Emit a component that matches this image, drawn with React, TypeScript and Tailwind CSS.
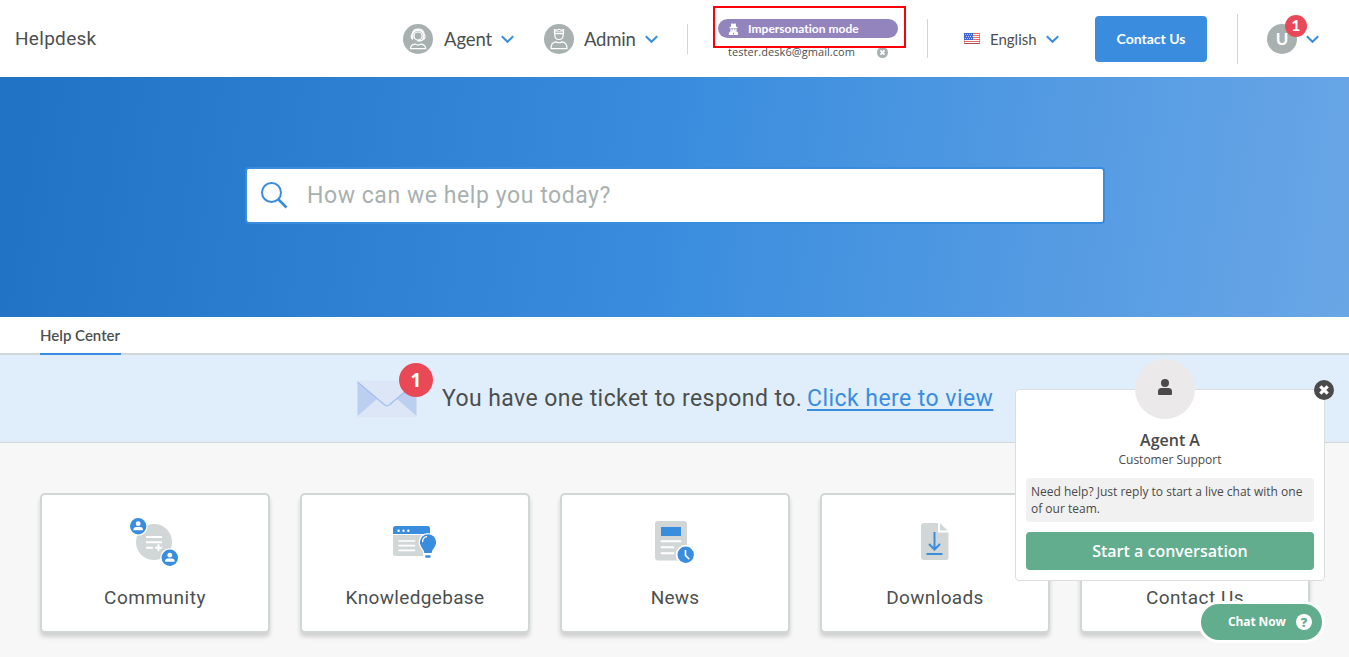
import React from "react";

const Chevron = () => (
  <svg className="relative top-px block h-[9px] w-[13px] shrink-0" viewBox="0 0 13 9" fill="none" stroke="#3a8dde" strokeWidth="2">
    <path d="M.8 1.300 6.500 6.800 12.200 1.300" />
  </svg>
);

const AgentAvatar = () => (
  <svg className="h-[30px] w-[30px] shrink-0" viewBox="0 0 30 30" fill="none">
    <circle cx="15" cy="15" r="15" fill="#a8b1b0" />
    <g stroke="#fff" strokeWidth="1.200">
      <path d="M9.800 15.500c-2-1.200-1.900-4-.7-5.200C10 3.500 20.500 3.500 21.200 10.300c1.200 1.200 1.300 4-.7 5.200" />
      <path d="M9.800 15V10.500c1-5.500 9.500-5.500 10.500 0V15" />
      <circle cx="15" cy="12" r="4" />
      <path d="M20.500 14.500c-.5 1.800-2 2.300-4 2.300" />
      <path d="M7.500 24.700c0-2.700 1.500-4.200 4.500-4.600 1.800 1.100 4.300 1.100 6 0 3 .4 4.700 1.900 4.700 4.600z" strokeLinejoin="round" />
    </g>
    <rect x="14" y="15.800" width="3.500" height="1.800" rx=".9" fill="#fff" />
  </svg>
);

const AdminAvatar = () => (
  <svg className="h-[30px] w-[30px] shrink-0" viewBox="0 0 30 30" fill="none">
    <circle cx="15" cy="15" r="15" fill="#a8b1b0" />
    <g stroke="#fff" strokeWidth="1.200" strokeLinejoin="round">
      <path d="M10.500 9.700V5.500l2.200.8L15 5.300l2.300 1 2.200-.8v4.200z" />
      <path d="M10.500 7.800h9" strokeWidth=".8" />
      <path d="M10.800 9.700V11c0 6 8.400 6 8.400 0V9.700" />
      <path d="M7 24.700c0-4.600 1.500-6.400 4.700-6.800 2 1 4.600 1 6.600 0 3.200.4 4.700 2.200 4.700 6.800z" />
    </g>
  </svg>
);

const SpyIcon = () => (
  <svg className="h-3 w-[11px] shrink-0" viewBox="0 0 11 12" fill="#fff">
    <path d="M3.300.6h1.500l.7.400.7-.4h1.500L8.300 4h1.200v1.200h-8V4h1.200z" />
    <path d="M2.500 5.800h6v1.400C8.300 9 7 9.500 5.500 9.500S2.700 9 2.500 7.200z" />
    <path d="M.8 12c0-2.200.5-3.300 1.700-3.800l3 1.400 3-1.400c1.200.5 1.700 1.600 1.700 3.800z" />
    <path d="M3.500 6.500h1.500v.8H3.500zM6 6.500h1.500v.8H6zM5 10h1v1.500H5z" fill="#9484be" />
  </svg>
);

const FlagIcon = () => (
  <svg className="h-[11px] w-4 shrink-0" viewBox="0 0 16 11">
    <rect width="16" height="11" fill="#fff" />
    <path d="M0 .5h16M0 2.500h16M0 4.500h16M0 6.500h16M0 8.500h16" stroke="#ee6a60" strokeWidth="1" />
    <rect width="9" height="7" fill="#3f66d4" />
    <path d="M1 1.500h7.500M2 3.500h6.500M1 5.500h7.500" stroke="#c9d6f8" strokeWidth="1" strokeDasharray="1 1" />
    <path d="M0 10.500h16" stroke="#a8504f" />
    <path d="M.5 7v4M15.500 0v11" stroke="#b9626a" strokeOpacity=".6" />
  </svg>
);

const CloseDot = ({ className, fill }: { className: string; fill: string }) => (
  <svg className={className} viewBox="0 0 20 20">
    <circle cx="10" cy="10" r="10" fill={fill} />
    <path d="m6.300 6.300 7.400 7.400m0-7.400-7.400 7.400" stroke="#fff" strokeWidth="3.200" />
  </svg>
);

const EnvelopeIcon = () => (
  <svg className="block h-[38px] w-[60px]" viewBox="0 0 60 38">
    <rect x=".5" y=".5" width="59" height="37" rx="1" fill="#dde6f7" />
    <path d="M.5 2v34L20 19zM59.500 2v34L40 19z" fill="#bbcff1" />
    <path d="M.5 2 27.500 24.800q2.500 2 5 0L59.500 2" fill="#dde6f7" stroke="#9fc0ef" strokeWidth="1.200" />
  </svg>
);

const Person = ({ x, y }: { x: number; y: number }) => (
  <g transform={`translate(${x} ${y})`}>
    <circle r="9.500" fill="#fff" />
    <circle r="8.200" fill="#3a8dde" />
    <circle cy="-2.500" r="2.400" fill="#fff" />
    <path d="M-4.700 4V2.700C-4.700 1-2.500.8 0 .8s4.700.2 4.700 1.900V4z" fill="#fff" />
  </g>
);

const CommunityIcon = () => (
  <svg className="h-[54px] w-[60px]" viewBox="0 0 60 54">
    <circle cx="29" cy="27" r="18" fill="#d1d6d6" />
    <path d="M21 22h16M21 27.300h16M21 32.700h7M30 32.700h7M33.500 29.200v7" stroke="#fff" strokeWidth="1.900" />
    <Person x={13.200} y={11.200} />
    <Person x={44.800} y={42.700} />
  </svg>
);

const KnowledgeIcon = () => (
  <svg className="h-[54px] w-[60px]" viewBox="0 0 60 54">
    <path d="M8 20h37.500v21H10.500A2.500 2.500 0 0 1 8 38.500z" fill="#d1d6d6" />
    <path d="M8 19v-5.500A2.500 2.500 0 0 1 10.500 11h32a2.500 2.500 0 0 1 2.500 2.500V19z" fill="#3a8dde" />
    <g fill="#fff">
      <circle cx="13.600" cy="15.700" r="1.200" />
      <circle cx="18.500" cy="15.700" r="1.200" />
      <circle cx="23.300" cy="15.700" r="1.200" />
    </g>
    <path d="M14 26h15.500M14 30.700h15.500M14 35.300h15.500" stroke="#fff" strokeWidth="1.700" strokeLinecap="round" />
    <path d="M38.200 38v5h9.200v-5c0-2.500 4.600-5.500 4.600-10.700a9.200 9.200 0 0 0-18.400 0c0 5.200 4.600 8.200 4.600 10.700z" fill="#fff" />
    <path d="M39.300 38h7.400c.2-3.700 4.400-6.200 4.400-10.700a8.100 8.100 0 0 0-16.200 0c0 4.500 4.200 7 4.400 10.700zM40.300 40.300h5.200v2.500h-5.200z" fill="#3a8dde" />
    <path d="M37.600 26.500c0-2.300 1.600-4.200 3.900-4.800" fill="none" stroke="#fff" strokeWidth="1.300" strokeLinecap="round" />
  </svg>
);

const NewsIcon = () => (
  <svg className="h-[54px] w-[60px]" viewBox="0 0 60 54">
    <rect x="10" y="6" width="32" height="39.500" rx="3" fill="#d1d6d6" />
    <rect x="16" y="12" width="20" height="9" fill="#3a8dde" />
    <path d="M16.500 26.300H35.500M16.500 32.300h12M16.500 38.300h12" stroke="#fff" strokeWidth="1.900" strokeLinecap="round" />
    <circle cx="40.700" cy="39.800" r="10" fill="#fff" />
    <circle cx="40.700" cy="39.800" r="8.200" fill="#3a8dde" />
    <path d="M40.500 35v5.500l3.800 3.600" fill="none" stroke="#fff" strokeWidth="1.600" />
  </svg>
);

const DownloadsIcon = () => (
  <svg className="h-[54px] w-[60px]" viewBox="0 0 60 54">
    <path d="M19 8h14v9.500h10.500v25a2.500 2.500 0 0 1-2.500 2.500H19a3 3 0 0 1-3-3V11a3 3 0 0 1 3-3zM35 8l7.500 7.500H35z" fill="#d1d6d6" />
    <path d="M29.500 17v17M24 29l5.500 5.500L35 29M21.500 39h16" fill="none" stroke="#3a8dde" strokeWidth="2" />
  </svg>
);

const ContactIcon = () => (
  <svg className="h-[54px] w-[60px]" viewBox="0 0 60 54">
    <rect x="10" y="13" width="40" height="28" rx="3" fill="#d1d6d6" />
    <path d="m12 16 18 13 18-13" fill="none" stroke="#3a8dde" strokeWidth="2" />
  </svg>
);

const cards = [
  { label: "Community", icon: <CommunityIcon />, tracking: "tracking-[0.520px]" },
  { label: "Knowledgebase", icon: <KnowledgeIcon />, tracking: "tracking-[0.340px]" },
  { label: "News", icon: <NewsIcon />, tracking: "tracking-[0.250px]" },
  { label: "Downloads", icon: <DownloadsIcon />, tracking: "tracking-[0.340px]" },
  { label: "Contact Us", icon: <ContactIcon />, tracking: "tracking-[0.500px]" },
];

function Header() {
  return (
    <header className="flex h-[77px] items-center bg-white font-[Lato,sans-serif] text-[#4c4f50]">
      <div className="w-[388px] shrink-0 pl-[15px] pt-[2px] font-[Roboto,sans-serif] text-[19px] tracking-[0.3px]">Helpdesk</div>
      <div className="ml-[15px] flex w-[111px] shrink-0 items-center">
        <AgentAvatar />
        <span className="ml-[11px] w-[57px] pt-[2px] text-[18.500px] tracking-[-0.100px]">Agent</span>
        <Chevron />
      </div>
      <div className="ml-[30px] flex w-[114px] shrink-0 items-center">
        <AdminAvatar />
        <span className="ml-[10px] w-[61px] pt-[2px] text-[18.500px] tracking-[-0.200px]">Admin</span>
        <Chevron />
      </div>
      <div className="ml-[29px] h-[30px] w-px shrink-0 bg-[#d1d6d6]" />
      <div className="relative ml-[30px] h-full w-[180px] shrink-0 pt-[19px]">
        <div className="flex h-[19px] items-center rounded-full bg-[#9484be] pl-[10px] text-white">
          <SpyIcon />
          <span className="ml-[9px] text-[12px] font-bold leading-[19px] tracking-[0.020px]">Impersonation mode</span>
        </div>
        <div className="mt-[5px] flex h-4 items-center pl-[10px] font-['Open_Sans',sans-serif] text-[11px] leading-4">
          <span className="w-[149px] pt-px tracking-[0.060px]">tester.desk6@gmail.com</span>
          <CloseDot className="mt-[2px] h-[11px] w-[11px]" fill="#a8b1b0" />
        </div>
        <div className="absolute -left-[5px] top-[6px] h-[42px] w-[193px] border-2 border-[#fb0007]" />
      </div>
      <div className="ml-[29px] h-[39px] w-px shrink-0 bg-[#d1d6d6]" />
      <div className="ml-[36px] flex w-[96px] shrink-0 items-center">
        <FlagIcon />
        <span className="ml-[10px] w-[56px] pt-px text-[15px]">English</span>
        <Chevron />
      </div>
      <button className="ml-[35px] h-[46px] w-[112px] shrink-0 rounded bg-[#3a8dde] text-[14px] font-bold text-white">Contact Us</button>
      <div className="ml-[30px] h-[50px] w-px shrink-0 bg-[#d1d6d6]" />
      <div className="relative ml-[29px] flex items-center">
        <div className="flex h-[30px] w-[30px] items-center justify-center rounded-full bg-[#a8b1b0] text-[17px] font-bold text-white">U</div>
        <div className="absolute -top-[9px] left-[18px] flex h-[22px] w-[22px] items-center justify-center rounded-full bg-[#e94957] pb-[2px] text-[16px] font-bold text-white">1</div>
        <div className="ml-[9px]"><Chevron /></div>
      </div>
    </header>
  );
}

function ChatWidget() {
  return (
    <aside className="font-['Open_Sans',sans-serif] text-[#4a4a4a]">
      <div className="absolute left-[1015px] top-[389px] h-[192px] w-[310px] rounded border border-[#dcdede] bg-white px-[10px] pt-[40px] text-center">
        <div className="absolute -top-[31px] left-[119px] flex h-[60px] w-[60px] items-center justify-center rounded-full bg-[#ebe9ea] pb-[5px]">
          <svg className="h-4 w-[14px]" viewBox="0 0 14 16" fill="#4a4a4a">
            <circle cx="7" cy="4" r="4" />
            <path d="M3.600 9h6.800A3.600 3.600 0 0 1 14 12.600V15q0 1-1 1H1q-1 0-1-1v-2.400A3.600 3.600 0 0 1 3.600 9z" />
          </svg>
        </div>
        <CloseDot className="absolute -top-[10px] left-[298px] h-5 w-5" fill="#4a4a4a" />
        <div className="text-[16px] font-[550] leading-5">Agent A</div>
        <div className="text-[12px] leading-5">Customer Support</div>
        <div className="mt-2 h-[44px] rounded-sm bg-[#f1f1f1] px-[5px] py-[5px] text-left text-[12px] leading-[17px]">
          Need help? Just reply to start a live chat with one of our team.
        </div>
        <button className="mt-[10px] h-[38px] w-full rounded-sm bg-[#62ad8d] text-[16px] font-semibold text-white">Start a conversation</button>
      </div>
      <div className="absolute left-[1198px] top-[601px] flex h-[42px] w-[127px] items-center rounded-full border-[3px] border-white bg-[#62ad8d] pl-[27px] text-[12px] font-bold text-white">
        <span className="w-[68px] tracking-[-0.100px]">Chat Now</span>
        <span className="flex h-4 w-4 items-center justify-center rounded-full bg-white text-[13px] font-extrabold leading-4 text-[#62ad8d]">?</span>
      </div>
    </aside>
  );
}

export default function App() {
  return (
    <div className="relative h-[657px] w-[1349px] overflow-hidden bg-[#f7f7f7]">
      <Header />
      <section className="flex h-[240px] justify-center bg-[linear-gradient(98deg,#2072c4_0%,#3a8dde_50%,#69a6e6_100%)] pt-[90px]">
        <div className="ml-px flex h-[57px] w-[860px] items-center rounded-[4px] border-2 border-[#3a8dde] bg-white">
          <svg className="ml-[14px] h-[27px] w-[27px]" viewBox="0 0 27 27" fill="none" stroke="#3a8dde">
            <circle cx="10.500" cy="10.500" r="9.500" strokeWidth="2" />
            <path d="m17.500 17.500 8 8" strokeWidth="2.600" />
          </svg>
          <span className="ml-[19px] pt-px font-[Roboto,sans-serif] text-[23px] tracking-[0.560px] text-[#a8b1b0]">How can we help you today?</span>
        </div>
      </section>
      <nav className="flex h-[38px] border-b-2 border-[#d1d6d6] bg-white pl-[40px]">
        <div className="h-[38px] w-[81px] whitespace-nowrap border-b-2 border-[#3a8dde] pt-[7px] font-[Lato,sans-serif] text-[15px] font-semibold text-[#4c4f50]">Help Center</div>
      </nav>
      <section className="flex h-[88px] items-start border-b border-[#d1d6d6] bg-[#e0eefc] pl-[357px]">
        <div className="relative mt-[25px] w-[60px]">
          <EnvelopeIcon />
          <div className="absolute -top-[17px] left-[42px] flex h-[34px] w-[34px] items-center justify-center rounded-full bg-[#e94957] font-['Open_Sans',sans-serif] text-[19px] font-bold text-white">1</div>
        </div>
        <div className="ml-[25px] flex pt-[27px] font-[Roboto,sans-serif] text-[23px] leading-[34px] text-[#4c4f50]">
          <span className="w-[365px] whitespace-nowrap tracking-[0.420px]">You have one ticket to respond to.</span>
          <a className="whitespace-nowrap tracking-[0.450px] text-[#3a8dde] underline decoration-[1.500px] underline-offset-[3px]">Click here to view</a>
        </div>
      </section>
      <main className="flex gap-[30px] pl-[40px] pt-[50px]">
        {cards.map((card) => (
          <div key={card.label} className="flex h-[140px] w-[230px] shrink-0 flex-col items-center rounded-[5px] border-2 border-[#d1d6d6] bg-white pt-[20px] shadow-[0_4px_4px_rgba(0,0,0,0.16)]">
            {card.icon}
            <div className={`mt-[15px] font-[Roboto,sans-serif] text-[19px] leading-[28px] text-[#4c4f50] ${card.tracking}`}>{card.label}</div>
          </div>
        ))}
      </main>
      <ChatWidget />
    </div>
  );
}
